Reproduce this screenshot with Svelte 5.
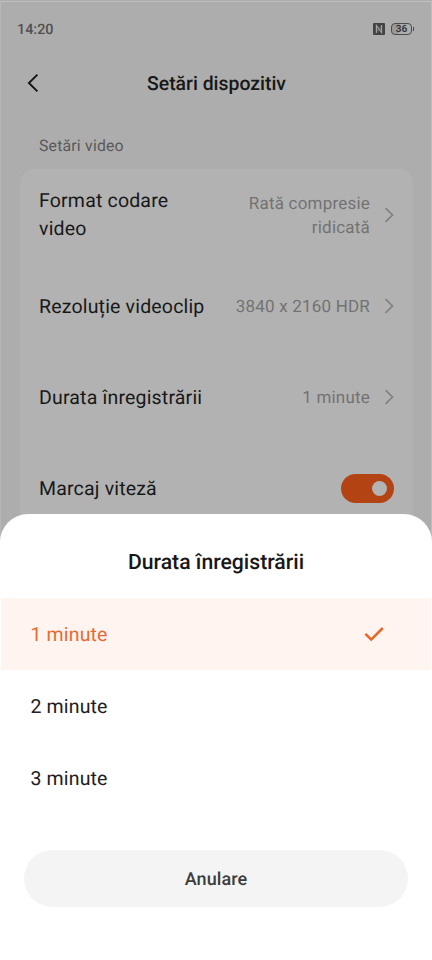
<script>
  const rows = [
    { label: 'Format codare video', value: 'Rată compresie ridicată', wrap: true },
    { label: 'Rezoluție videoclip', value: '3840 x 2160 HDR' },
    { label: 'Durata înregistrării', value: '1 minute' },
    { label: 'Marcaj viteză', toggle: true }
  ];
  const options = ['1 minute', '2 minute', '3 minute'];
  let selected = $state(0);
</script>

<div class="screen">
  <main class="page">
    <div class="status">
      <span class="time">14:20</span>
      <div class="indicators">
        <svg width="12" height="12" viewBox="0 0 12 12">
          <rect width="12" height="12" rx="1" fill="#434343" />
          <path d="M3.4 10V2.4L8.6 9.6V2" fill="none" stroke="#a5a5a5" stroke-width="1.1" />
          <path d="M5 8.6V5.4M7.1 6.6V3.4" fill="none" stroke="#8a8a8a" stroke-width=".8" />
        </svg>
        <div class="battery"><span>36</span></div>
      </div>
    </div>
    <header>
      <svg class="back" width="12" height="20" viewBox="0 0 12 20">
        <path d="M10.4 1.6L1.9 10L10.4 18.4" fill="none" stroke="#151515" stroke-width="1.9" />
      </svg>
      <h1>Setări dispozitiv</h1>
    </header>
    <h2>Setări video</h2>
    <section class="card">
      {#each rows as row}
        <div class="row">
          <span class="label" class:wrap={row.wrap}>{row.label}</span>
          {#if row.toggle}
            <span class="toggle"><i></i></span>
          {:else}
            <span class="value" class:wrap={row.wrap}>{row.value}</span>
            <svg class="chevron" width="10" height="16" viewBox="0 0 10 16">
              <path d="M1.5 1.2L8.5 8L1.5 14.8" fill="none" stroke="#808080" stroke-width="1.7" />
            </svg>
          {/if}
        </div>
      {/each}
    </section>
  </main>

  <div class="sheet">
    <h3>Durata înregistrării</h3>
    <div class="options">
      {#each options as option, i}
        <button class="option" class:selected={selected === i} onclick={() => (selected = i)}>
          <span>{option}</span>
          {#if selected === i}
            <svg width="20" height="16" viewBox="0 0 20 16">
              <path d="M1.4 7.8L7.2 13.6L18.8 2" fill="none" stroke="#ea6426" stroke-width="2.5" />
            </svg>
          {/if}
        </button>
      {/each}
    </div>
    <button class="cancel">Anulare</button>
  </div>
</div>

<style>
  :global(body) { margin: 0; }
  .screen {
    position: relative;
    width: 432px;
    height: 960px;
    overflow: hidden;
    box-sizing: border-box;
    background: #adadad;
    border-top: 1px solid #adadad;
    font-family: Roboto, "Noto Sans", sans-serif;
    text-rendering: geometricPrecision;
    color: #181818;
  }
  .page {
    box-sizing: border-box;
    height: 959px;
    border-top: 1px solid #bfbfbf;
    border-right: 1px solid #bdbdbd;
    border-left: 1px solid #b7b7b7;
    padding: 0 18px 0 19px;
  }
  h1, h2, h3 { margin: 0; }
  .status {
    display: flex;
    align-items: center;
    justify-content: space-between;
    height: 54px;
    margin: 0 -1px 0 -3px;
  }
  .time { padding-top: 2px; font-size: 14.4px; font-weight: 500; line-height: 20px; color: #505050; }
  .indicators { display: flex; align-items: center; gap: 6px; }
  .battery {
    position: relative;
    box-sizing: border-box;
    width: 21px;
    height: 12px;
    margin-right: 2px;
    border: 1px solid #4b4b4b;
    border-radius: 4px;
    display: flex;
    align-items: center;
    justify-content: center;
    background: linear-gradient(90deg, #999 36%, transparent 36%);
    font-size: 10px;
    font-weight: 700;
    line-height: 10px;
    color: #383838;
  }
  .battery span { padding-top: 1px; }
  .battery::after {
    content: "";
    position: absolute;
    right: -3px;
    top: 3px;
    width: 1.5px;
    height: 4px;
    background: #4b4b4b;
  }
  header {
    display: flex;
    align-items: center;
    justify-content: center;
    position: relative;
    height: 54px;
  }
  .back { position: absolute; left: 7px; top: 17px; }
  h1 { padding-top: 2px; font-size: 19.4px; font-weight: 500; line-height: 26px; }
  h2 {
    margin: 26px 0 0 19px;
    font-size: 15.8px;
    font-weight: 400;
    line-height: 20px;
    letter-spacing: .2px;
    color: #595959;
  }
  .card {
    margin-top: 13px;
    height: 390px;
    border-radius: 14px;
    background: #b2b2b2;
  }
  .row {
    display: flex;
    align-items: center;
    height: 91.2px;
    padding: 0 19px;
  }
  .label { flex: none; padding-top: 1.4px; font-size: 19.5px; line-height: 27.5px; letter-spacing: .18px; }
  .label.wrap { width: 150px; padding-top: 0; }
  .value {
    margin-left: auto;
    padding-top: 2px;
    text-align: right;
    font-size: 17px;
    line-height: 24px;
    letter-spacing: .2px;
    color: #727272;
  }
  .value.wrap { width: 140px; }
  .chevron { margin-left: 14px; }
  .toggle {
    display: flex;
    align-items: center;
    justify-content: flex-end;
    box-sizing: border-box;
    width: 53px;
    height: 29px;
    margin-left: auto;
    padding-right: 7px;
    border-radius: 15px;
    background: #b34312;
  }
  .toggle i { width: 15px; height: 15px; border-radius: 50%; background: #b3b3b3; }
  .sheet {
    position: absolute;
    left: 0;
    right: 0;
    top: 513px;
    bottom: 0;
    border-radius: 28px 28px 0 0;
    background: #fff;
  }
  h3 {
    padding: 35px 0 22px;
    text-align: center;
    font-size: 21.2px;
    font-weight: 500;
    line-height: 27px;
  }
  .options { display: flex; flex-direction: column; margin: 0 1px; }
  button { border: 0; font-family: inherit; text-rendering: inherit; }
  .option {
    display: flex;
    align-items: center;
    justify-content: space-between;
    height: 72px;
    padding: 0 47px 0 29.5px;
    background: none;
    font-size: 19.5px;
    letter-spacing: .15px;
    color: #202020;
  }
  .option.selected { background: #fff4f0; color: #e86a32; }
  .cancel {
    display: block;
    width: 384px;
    height: 57px;
    margin: 36px auto 0;
    padding: 2px 0 0;
    border-radius: 29px;
    background: #f4f4f4;
    color: #3d3d3d;
    font-size: 18px;
    font-weight: 500;
    letter-spacing: .1px;
  }
</style>
